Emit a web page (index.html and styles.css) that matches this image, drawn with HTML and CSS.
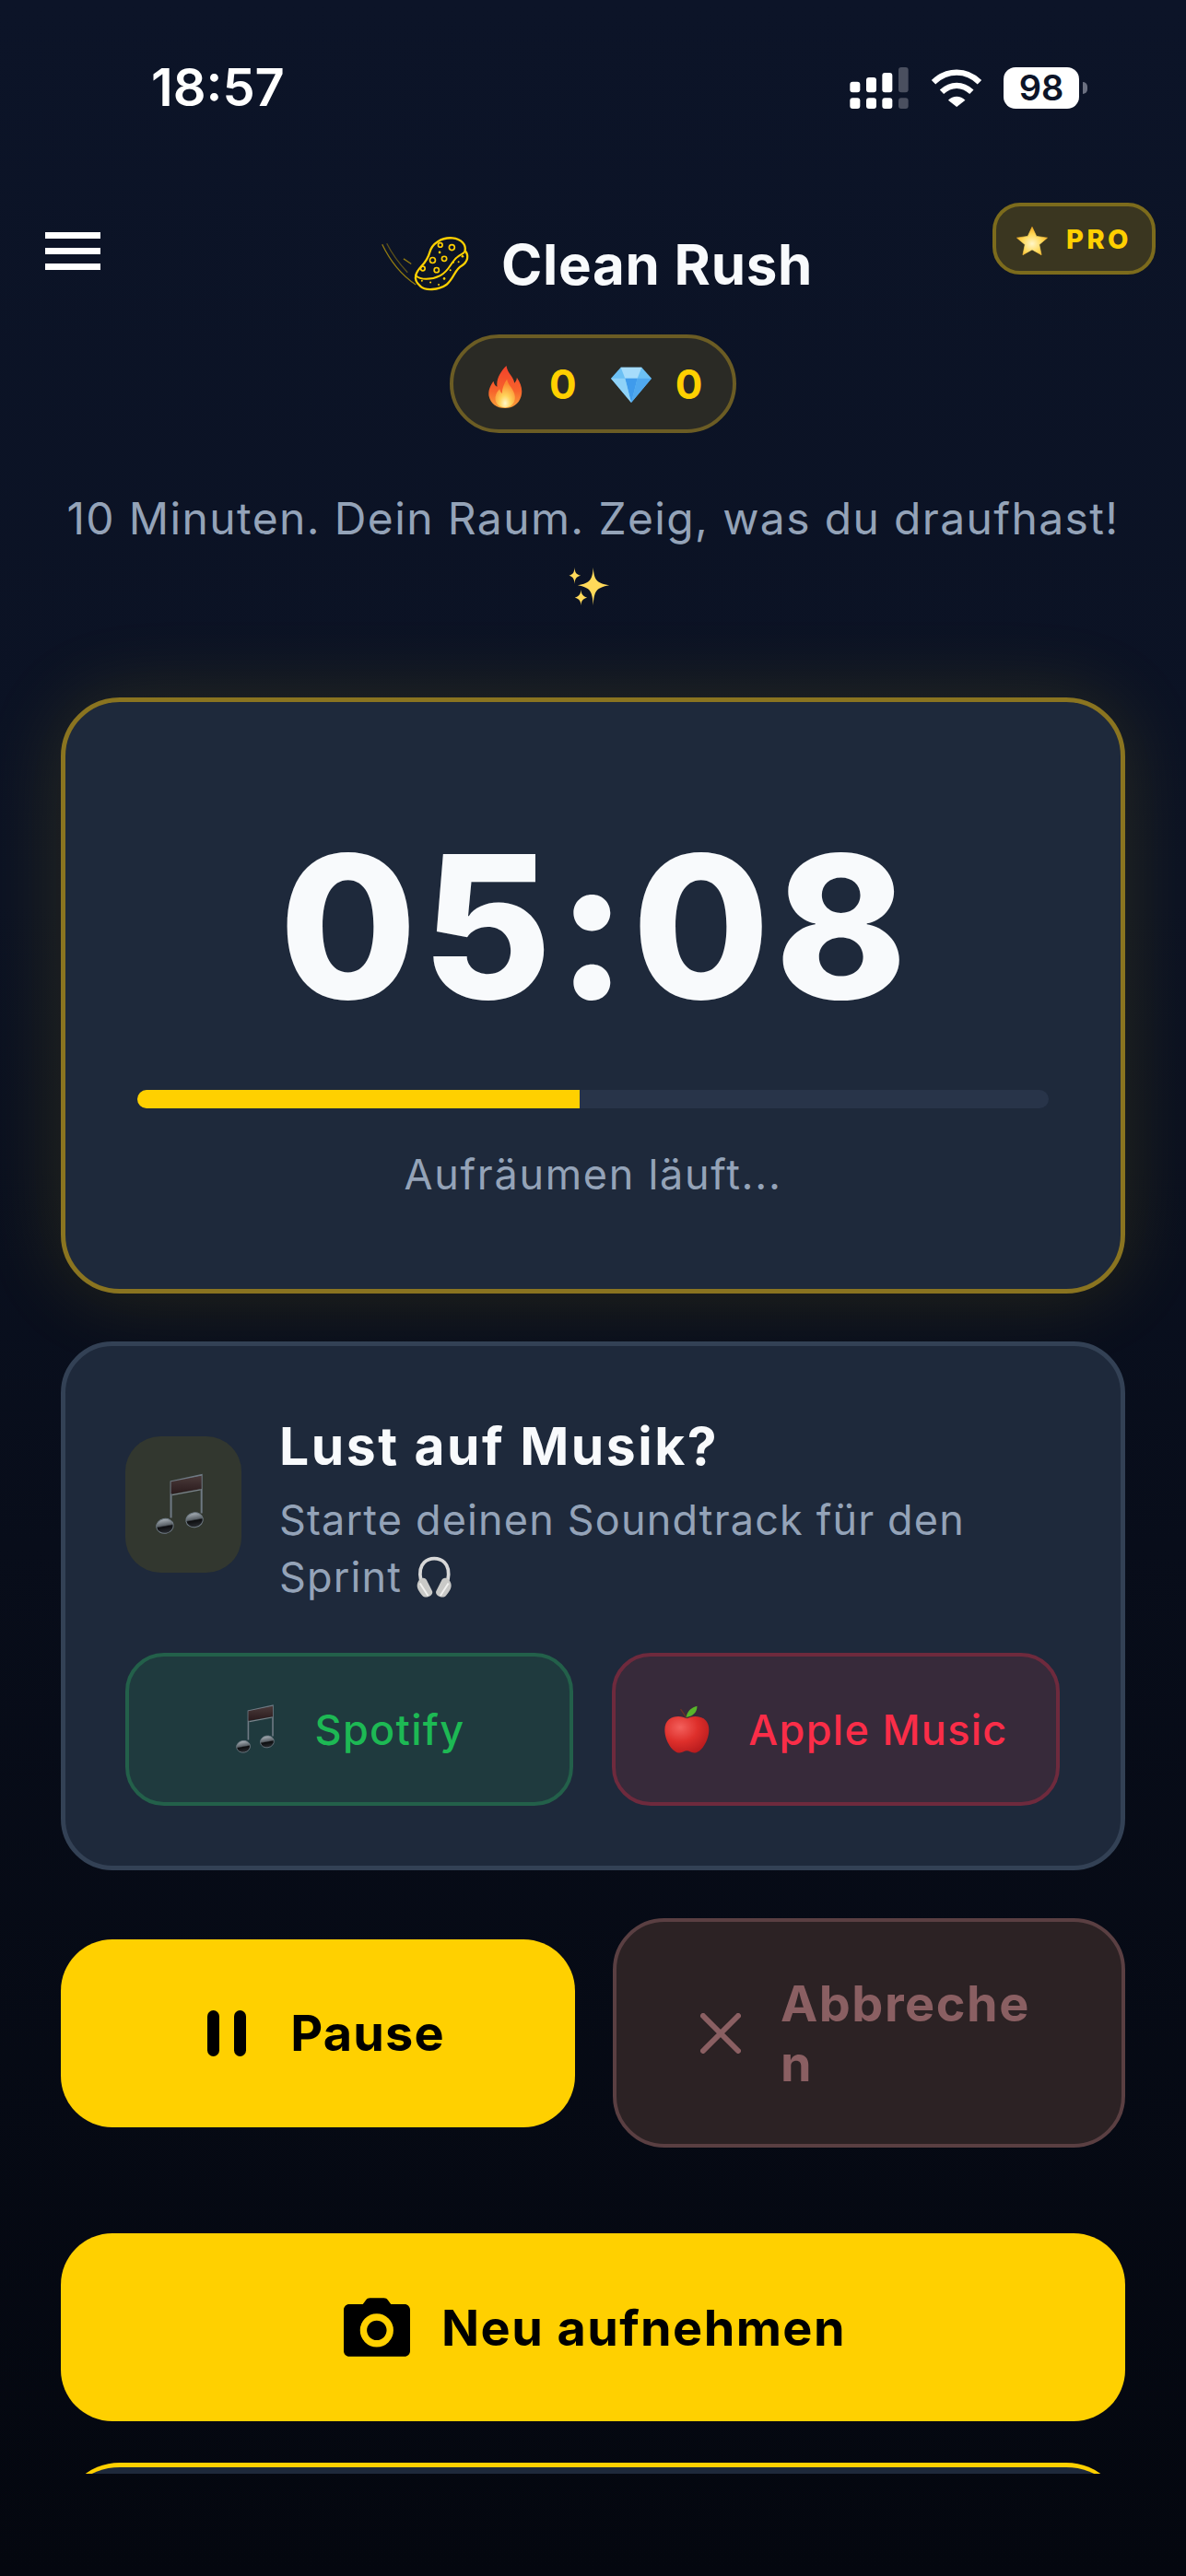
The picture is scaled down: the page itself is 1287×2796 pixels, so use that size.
FILE: index.html
```html
<!DOCTYPE html>
<html lang="de">
<head>
  <meta charset="UTF-8" />
  <meta name="viewport" content="width=device-width, initial-scale=1.0" />
  <title>Clean Rush</title>
  <link rel="stylesheet" href="styles.css">
</head>
<body>
  <svg class="sprites" aria-hidden="true">
    <defs>
      <linearGradient id="noteHead" x1="0" y1="0" x2="0" y2="1">
        <stop offset="0" stop-color="#aab2b8" />
        <stop offset="0.45" stop-color="#5b6268" />
        <stop offset="0.55" stop-color="#0d0e10" />
        <stop offset="1" stop-color="#2b2e33" />
      </linearGradient>
      <linearGradient id="noteBeam" x1="0" y1="0" x2="0" y2="1">
        <stop offset="0" stop-color="#4a3a3a" />
        <stop offset="1" stop-color="#2a1a1c" />
      </linearGradient>
      <symbol id="note" viewBox="125 155 163 203">
        <path d="M178 300V182L278 160V285" fill="none" stroke="#6f7a84" stroke-width="6" />
        <path d="M178 182L278 162V205L178 222Z" fill="url(#noteBeam)" />
        <path d="M182 225L275 208" stroke="#7c858c" stroke-width="4" />
        <ellipse cx="158" cy="327" rx="28" ry="24" transform="rotate(-10 158 327)" fill="url(#noteHead)" stroke="#6f7a84" stroke-width="3" />
        <ellipse cx="255" cy="307" rx="28" ry="24" transform="rotate(-10 255 307)" fill="url(#noteHead)" stroke="#6f7a84" stroke-width="3" />
      </symbol>
    </defs>
  </svg>

  <div class="screen">
    <div class="status-bar">
      <span class="clock">18:57</span>
      <div class="status-icons">
        <svg class="signal" viewBox="130 98 190 135">
          <g fill="#fff">
            <rect x="130" y="145" width="33" height="35" rx="9" />
            <rect x="183" y="131" width="33" height="49" rx="9" />
            <rect x="235" y="116" width="33" height="64" rx="9" />
            <rect x="130" y="198" width="33" height="35" rx="9" />
            <rect x="183" y="198" width="33" height="35" rx="9" />
            <rect x="235" y="198" width="33" height="35" rx="9" />
          </g>
          <g fill="#4a4f5f">
            <rect x="288" y="98" width="32" height="82" rx="9" />
            <rect x="288" y="198" width="32" height="35" rx="9" />
          </g>
        </svg>
        <svg class="wifi" viewBox="393 105 167 124">
          <path d="M401 148C445 105 509 105 552 148" fill="none" stroke="#fff" stroke-width="19" />
          <path d="M428 180C458 152 496 152 526 180" fill="none" stroke="#fff" stroke-width="19" />
          <path d="M449 207C465 191 489 191 505 207L477 229Z" fill="#fff" />
        </svg>
        <div class="battery"><span class="battery-level">98</span><span class="battery-nub"></span></div>
      </div>
    </div>

    <header class="top-bar">
      <button class="menu-btn" type="button" aria-label="Menü">
        <span></span><span></span><span></span>
      </button>
      <div class="brand">
        <svg class="brand-logo" viewBox="20 20 295 190">
          <g fill="none" stroke="#ffd000">
            <path d="M135 150C138 125 170 115 180 75C187 45 220 24 255 27C285 30 300 50 296 68C310 85 305 105 285 118C262 130 260 160 235 180C210 198 165 200 150 185C135 172 132 160 135 150Z" stroke-width="7" />
            <path d="M135 150C150 165 185 165 215 150C245 135 250 105 270 90C285 78 298 75 296 68" stroke-width="6" />
            <g stroke-width="5">
              <circle cx="215" cy="50" r="7" />
              <circle cx="253" cy="58" r="9" />
              <circle cx="190" cy="100" r="9" />
              <circle cx="228" cy="95" r="8" />
              <circle cx="158" cy="127" r="7" />
              <circle cx="203" cy="132" r="8" />
            </g>
            <g opacity="0.55" stroke-width="4">
              <path d="M25 48C50 100 90 150 135 180" />
              <path d="M40 45C60 85 80 110 108 140" opacity="0.6" />
              <path d="M95 95L120 112" />
            </g>
          </g>
          <g fill="#ffd000">
            <circle cx="213" cy="74" r="4" />
            <circle cx="258" cy="107" r="3" />
            <circle cx="275" cy="105" r="3" />
            <circle cx="288" cy="87" r="4" />
            <circle cx="248" cy="132" r="3" />
            <circle cx="228" cy="160" r="4" />
            <circle cx="155" cy="167" r="3" />
            <circle cx="183" cy="172" r="3" />
            <circle cx="210" cy="180" r="3" />
          </g>
        </svg>
        <h1 class="brand-name">Clean Rush</h1>
      </div>
      <a class="pro-badge" href="#">
        <svg class="star-icon" viewBox="0 0 100 92">
          <defs>
            <radialGradient id="starFill" cx="0.5" cy="0.6" r="0.6">
              <stop offset="0" stop-color="#fff6c8" />
              <stop offset="0.55" stop-color="#ffd95a" />
              <stop offset="1" stop-color="#f2a81c" />
            </radialGradient>
          </defs>
          <path d="M50 1L64 31L99 36L73 58L80 91L50 74L20 91L27 58L1 36L36 31Z" fill="url(#starFill)" stroke="url(#starFill)" stroke-width="2" stroke-linejoin="round" />
        </svg>
        <span>PRO</span>
      </a>
    </header>

    <div class="stats-pill">
      <svg class="flame-icon" viewBox="0 0 110 138">
        <defs>
          <linearGradient id="flameOuter" x1="0" y1="0" x2="0" y2="1">
            <stop offset="0" stop-color="#f2402a" />
            <stop offset="0.6" stop-color="#f7642c" />
            <stop offset="1" stop-color="#f9a23a" />
          </linearGradient>
          <radialGradient id="flameInner" cx="0.5" cy="0.85" r="0.7">
            <stop offset="0" stop-color="#fff7c8" />
            <stop offset="0.4" stop-color="#ffd35a" />
            <stop offset="1" stop-color="#fb8a30" />
          </radialGradient>
        </defs>
        <path d="M58 0C62 26 82 36 84 56C90 50 92 44 92 38C106 58 112 78 106 100C98 126 78 138 54 138C26 138 6 122 1 98C-2 78 8 62 16 50C18 60 22 66 28 68C24 42 40 18 58 0Z" fill="url(#flameOuter)" />
        <path d="M60 44C62 62 84 76 86 100C88 122 72 136 54 136C34 136 20 122 22 102C24 90 30 82 36 76C38 84 40 88 44 90C44 74 50 58 60 44Z" fill="url(#flameInner)" />
      </svg>
      <span class="stat-value">0</span>
      <svg class="gem-icon" viewBox="0 0 132 117">
        <path d="M32 2H100L132 38L66 117L0 38Z" fill="#6cc0f4" />
        <path d="M32 2L46 38H86L100 2Z" fill="#a6dcfb" />
        <path d="M46 38H86L66 117Z" fill="#3f9bec" />
        <path d="M0 38H46L66 117Z" fill="#8fd2f8" />
        <path d="M132 38H86L66 117Z" fill="#4fa8ef" />
      </svg>
      <span class="stat-value">0</span>
    </div>

    <p class="tagline">10 Minuten. Dein Raum. Zeig, was du draufhast!
      <svg class="sparkles" viewBox="45 42 142 136">
        <g fill="#ffd95a">
          <path d="M131 45C134 85 140 98 186 106C140 114 134 128 131 175C128 128 122 114 78 106C122 98 128 85 131 45Z" />
          <path d="M67 44C68 62 72 68 88 73C72 78 68 84 67 102C66 84 62 78 48 73C62 68 66 62 67 44Z" />
          <path d="M89 120C90 136 94 142 110 148C94 154 90 160 89 176C88 160 84 154 68 148C84 142 88 136 89 120Z" />
        </g>
      </svg>
    </p>

    <main class="content">
      <section class="timer-card">
        <div class="timer-value">05:08</div>
        <div class="progress-track">
          <div class="progress-fill" style="width: 48.5%"></div>
        </div>
        <p class="timer-status">Aufräumen läuft...</p>
      </section>

      <section class="music-card">
        <div class="music-head">
          <div class="music-icon"><svg class="note-lg"><use href="#note" /></svg></div>
          <div class="music-text">
            <h2>Lust auf Musik?</h2>
            <p>Starte deinen Soundtrack für den Sprint
              <svg class="headphones" viewBox="215 112 125 140">
                <path d="M235 190C222 130 262 120 278 120C296 120 334 130 322 190" fill="none" stroke="#d8d8d8" stroke-width="11" />
                <path d="M224 200C232 178 250 180 254 190L272 226C276 240 250 252 240 240C228 226 220 214 224 200Z" fill="#c9c9c7" />
                <path d="M332 200C324 178 306 180 302 190L284 226C280 240 306 252 316 240C328 226 336 214 332 200Z" fill="#c9c9c7" />
                <path d="M232 200L258 240M324 200L298 240" stroke="#f1f1ef" stroke-width="6" />
              </svg>
            </p>
          </div>
        </div>
        <div class="music-links">
          <a class="music-link spotify" href="#"><svg class="note-sm"><use href="#note" /></svg>Spotify</a>
          <a class="music-link apple" href="#">
            <svg class="apple-icon" viewBox="72 70 148 156">
              <defs>
                <radialGradient id="appleFill" cx="0.35" cy="0.3" r="0.8">
                  <stop offset="0" stop-color="#f3605c" />
                  <stop offset="0.5" stop-color="#de2f2b" />
                  <stop offset="1" stop-color="#b3191c" />
                </radialGradient>
              </defs>
              <path d="M148 112L127 82" stroke="#6a3326" stroke-width="4" />
              <path d="M145 108C148 88 160 78 180 72C180 92 168 104 145 108Z" fill="#58b52a" />
              <path d="M147 112C170 98 218 102 218 148C218 186 190 224 170 222C160 221 154 215 147 215C140 215 134 221 124 222C104 224 76 186 76 148C76 102 124 98 147 112Z" fill="url(#appleFill)" />
            </svg>
            Apple Music
          </a>
        </div>
      </section>

      <div class="control-row">
        <button class="action-btn primary pause-btn" type="button">
          <svg class="pause-icon" viewBox="0 0 42 50">
            <rect x="0" y="0" width="13" height="50" rx="6.5" />
            <rect x="29" y="0" width="13" height="50" rx="6.5" />
          </svg>
          Pause
        </button>
        <button class="action-btn cancel-btn" type="button">
          <svg class="cancel-icon" viewBox="0 0 44 44">
            <path d="M3 3L41 41M41 3L3 41" fill="none" stroke="currentColor" stroke-width="6" stroke-linecap="round" />
          </svg>
          <span class="cancel-label">Abbrechen</span>
        </button>
      </div>

      <button class="action-btn primary retake-btn" type="button">
        <svg class="camera-icon" viewBox="43 65 215 190">
          <path d="M105 85L115 72C118 67 122 65 128 65H173C179 65 183 67 186 72L196 85H240C250 85 258 93 258 103V237C258 247 250 255 240 255H61C51 255 43 247 43 237V103C43 93 51 85 61 85Z" fill="#000" />
          <circle cx="150" cy="170" r="43" fill="none" stroke="#ffd000" stroke-width="22" />
        </svg>
        Neu aufnehmen
      </button>

      <div class="next-card"></div>
    </main>
  </div>
</body>
</html>
```

FILE: styles.css
```css
* {
  margin: 0;
  padding: 0;
  box-sizing: border-box;
}

body {
  width: 1287px;
  height: 2796px;
  font-family: Inter, "Liberation Sans", sans-serif;
  background: linear-gradient(180deg, #0c1428 0%, #0b1223 35%, #080d1a 60%, #04070f 100%);
  color: #f8fafc;
  overflow: hidden;
}

a {
  text-decoration: none;
}

button {
  font-family: inherit;
  border: none;
  background: none;
}

.sprites {
  position: absolute;
  width: 0;
  height: 0;
}

.screen {
  height: 2685px;
  overflow: hidden;
}

/* Status bar */
.status-bar {
  display: flex;
  align-items: center;
  justify-content: space-between;
  height: 190px;
  padding: 0 107px 0 164px;
}

.clock {
  font-size: 56px;
  font-weight: 600;
  color: #fff;
}

.status-icons {
  display: flex;
  align-items: center;
}

.signal {
  width: 64px;
  height: 45px;
  margin-right: 24px;
}

.wifi {
  width: 56px;
  height: 41px;
  margin-right: 23px;
}

.battery {
  display: flex;
  align-items: center;
}

.battery-level {
  width: 82px;
  height: 45px;
  background: #fff;
  border-radius: 13px;
  color: #0c1428;
  font-size: 38px;
  font-weight: 600;
  line-height: 45px;
  text-align: center;
}

.battery-nub {
  width: 5px;
  height: 13px;
  margin-left: 4px;
  background: #6b7080;
  border-radius: 0 6px 6px 0;
}

/* Header */
.top-bar {
  display: grid;
  grid-template-columns: 1fr auto 1fr;
  height: 173px;
  padding: 0 33px 0 41px;
}

.menu-btn {
  display: flex;
  flex-direction: column;
  gap: 10px;
  width: 60px;
  margin: 62px 0 0 8px;
}

.menu-btn span {
  display: block;
  height: 7px;
  background: #fff;
}

.brand {
  display: flex;
  align-items: center;
  gap: 33px;
  height: 60px;
  margin-top: 67px;
}

.brand-logo {
  width: 98px;
  height: 63px;
}

.brand-name {
  font-size: 60px;
  font-weight: 700;
  line-height: 60px;
  letter-spacing: 0.7px;
  white-space: nowrap;
}

.pro-badge {
  display: flex;
  align-items: center;
  justify-content: center;
  gap: 20px;
  justify-self: end;
  width: 177px;
  height: 78px;
  margin-top: 30px;
  background: #3a3620;
  border: 4px solid #7c6b1c;
  border-radius: 30px;
  color: #ffd000;
  font-size: 29px;
  font-weight: 800;
  letter-spacing: 3.5px;
}

.star-icon {
  width: 34px;
  height: 31px;
  margin-top: 4px;
}

.stats-pill {
  display: flex;
  align-items: center;
  width: 311px;
  height: 107px;
  margin: 0 auto;
  padding-left: 38px;
  background: #2a2a25;
  border: 4px solid #6b5c24;
  border-radius: 54px;
}

.flame-icon {
  width: 37px;
  height: 46px;
  margin: 6px 29px 0 0;
}

.gem-icon {
  width: 44px;
  height: 39px;
  margin: 2px 26px 0 37px;
}

.stat-value {
  color: #ffd000;
  font-size: 44px;
  font-weight: 700;
  line-height: 1;
}

.tagline {
  margin-top: 57px;
  padding: 0 66px;
  color: #94a3b8;
  font-size: 48px;
  line-height: 72px;
  letter-spacing: 1.37px;
  text-align: center;
}

.sparkles {
  width: 46px;
  height: 43px;
  margin-right: 10px;
  vertical-align: -6px;
}

.content {
  margin: 86px 66px 0;
}

/* Timer */
.timer-card {
  height: 647px;
  padding: 114px 78px 0;
  background: #1e293b;
  border: 5px solid #8a7420;
  border-radius: 64px;
  box-shadow: 0 0 90px rgba(255, 208, 0, 0.13);
}

.timer-value {
  padding-left: 6px;
  font-size: 216px;
  font-weight: 800;
  line-height: 260px;
  letter-spacing: 5.5px;
  text-align: center;
}

.progress-track {
  height: 20px;
  margin-top: 47px;
  background: #283449;
  border-radius: 10px;
}

.progress-fill {
  height: 100%;
  background: #ffd000;
  border-radius: 10px 0 0 10px;
}

.timer-status {
  margin-top: 42px;
  color: #94a3b8;
  font-size: 45px;
  line-height: 60px;
  letter-spacing: 1.7px;
  text-align: center;
}

/* Music prompt */
.music-card {
  margin-top: 52px;
  padding: 73px 66px 65px 65px;
  background: #1e293b;
  border: 5px solid #334155;
  border-radius: 56px;
}

.music-head {
  display: flex;
  align-items: flex-start;
  gap: 41px;
}

.music-icon {
  display: flex;
  align-items: center;
  justify-content: center;
  flex: none;
  width: 126px;
  height: 148px;
  margin-top: 25px;
  background: #32372f;
  border-radius: 38px;
}

.note-lg {
  width: 54px;
  height: 68px;
  margin-right: 8px;
}

.music-text h2 {
  font-size: 57px;
  font-weight: 700;
  line-height: 72px;
  letter-spacing: 2.5px;
}

.music-text p {
  margin-top: 13px;
  color: #94a3b8;
  font-size: 45px;
  line-height: 62px;
  letter-spacing: 1.15px;
}

.headphones {
  width: 42px;
  height: 47px;
  vertical-align: -8px;
}

.music-links {
  display: grid;
  grid-template-columns: 1fr 1fr;
  gap: 42px;
  margin-top: 51px;
}

.music-link {
  display: flex;
  align-items: center;
  justify-content: center;
  height: 166px;
  border: 4px solid;
  border-radius: 42px;
  font-size: 45px;
  font-weight: 500;
  letter-spacing: 1.3px;
}

.spotify {
  gap: 42px;
  background: #1f3a3e;
  border-color: #23604a;
  color: #1db954;
}

.apple {
  gap: 42px;
  background: #372a3a;
  border-color: #6e2a3d;
  color: #fa2d48;
}

.note-sm {
  width: 46px;
  height: 54px;
}

.apple-icon {
  width: 50px;
  height: 53px;
}

/* Action buttons */
.control-row {
  display: grid;
  grid-template-columns: 558px 556px;
  gap: 41px;
  align-items: center;
  margin-top: 52px;
}

.action-btn {
  display: flex;
  align-items: center;
  justify-content: center;
  font-size: 54px;
  font-weight: 700;
  border-radius: 56px;
}

.primary {
  height: 204px;
  background: #ffd000;
  color: #000;
}

.pause-btn {
  gap: 48px;
  padding-left: 18px;
  letter-spacing: 1.2px;
}

.pause-icon {
  width: 42px;
  height: 50px;
}

.cancel-btn {
  justify-content: flex-start;
  gap: 43px;
  padding: 55.5px 91px;
  background: #2c2224;
  border: 4px solid #5a3f42;
  color: #8a5f62;
  line-height: 65px;
  letter-spacing: 1.5px;
  text-align: left;
}

.cancel-icon {
  flex: none;
  width: 44px;
  height: 44px;
}

.cancel-label {
  min-width: 0;
  overflow-wrap: anywhere;
}

.retake-btn {
  gap: 34px;
  width: 100%;
  margin-top: 93px;
  padding-left: 4px;
  letter-spacing: 1.4px;
}

.camera-icon {
  width: 72px;
  height: 64px;
}

.next-card {
  height: 204px;
  margin-top: 45px;
  background: #1e293b;
  border-top: 5px solid #ffd000;
  border-radius: 64px;
}
```
